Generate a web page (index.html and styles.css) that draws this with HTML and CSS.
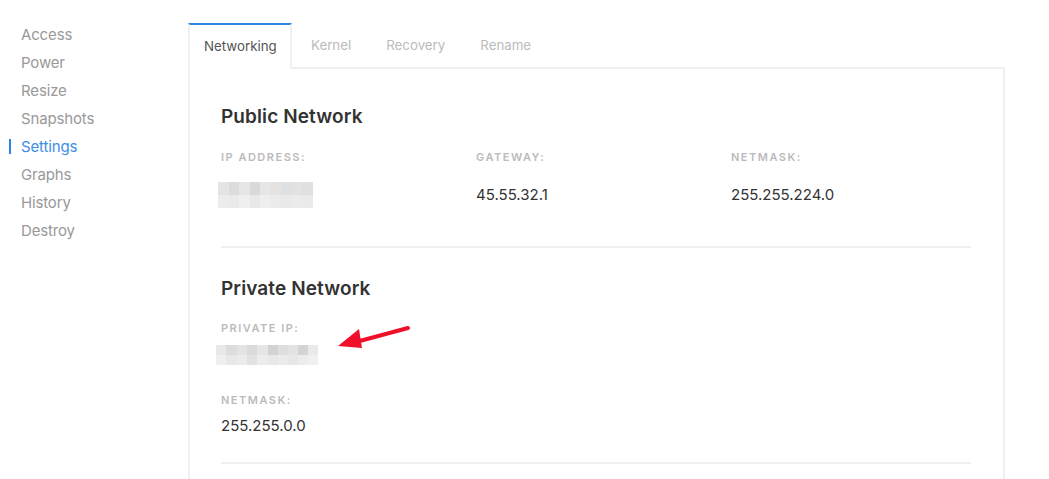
FILE: index.html
```html
<!DOCTYPE html>
<html>
<head>
<meta charset="utf-8">
<link rel="stylesheet" href="styles.css">
</head>
<body>
<div class="page">
  <nav class="sidebar">
    <a class="side-item">Access</a>
    <a class="side-item">Power</a>
    <a class="side-item">Resize</a>
    <a class="side-item">Snapshots</a>
    <a class="side-item active">Settings</a>
    <a class="side-item">Graphs</a>
    <a class="side-item">History</a>
    <a class="side-item">Destroy</a>
  </nav>
  <main class="main">
    <div class="tabs">
      <div class="tab active">Networking</div>
      <div class="tab">Kernel</div>
      <div class="tab">Recovery</div>
      <div class="tab">Rename</div>
    </div>
    <div class="panel">
      <section class="section section-public">
        <h2 class="heading">Public Network</h2>
        <div class="cols">
          <div class="field">
            <div class="label">IP Address:</div>
            <div class="value-row">
              <svg class="blur blur-public" width="95" height="26" viewBox="0 0 95 26">
                <rect x="0" y="0" width="11" height="13" fill="#e4e4e4"/>
                <rect x="11" y="0" width="10" height="13" fill="#dcdcdc"/>
                <rect x="21" y="0" width="11" height="13" fill="#e6e6e4"/>
                <rect x="32" y="0" width="10" height="13" fill="#d9d9d9"/>
                <rect x="42" y="0" width="11" height="13" fill="#e6e6e6"/>
                <rect x="53" y="0" width="10" height="13" fill="#e4e3e1"/>
                <rect x="63" y="0" width="11" height="13" fill="#dfe0e3"/>
                <rect x="74" y="0" width="10" height="13" fill="#e3e1e1"/>
                <rect x="84" y="0" width="11" height="13" fill="#e0e0e0"/>
                <rect x="0" y="13" width="11" height="13" fill="#ececec"/>
                <rect x="11" y="13" width="10" height="13" fill="#e8eaec"/>
                <rect x="21" y="13" width="11" height="13" fill="#f0efed"/>
                <rect x="32" y="13" width="10" height="13" fill="#e8e8e8"/>
                <rect x="42" y="13" width="11" height="13" fill="#eeeef0"/>
                <rect x="53" y="13" width="10" height="13" fill="#ebebe9"/>
                <rect x="63" y="13" width="11" height="13" fill="#e9e9ea"/>
                <rect x="74" y="13" width="10" height="13" fill="#ebebeb"/>
                <rect x="84" y="13" width="11" height="13" fill="#eaeaea"/>
              </svg>
            </div>
          </div>
          <div class="field">
            <div class="label">Gateway:</div>
            <div class="value-row"><span class="value">45.55.32.1</span></div>
          </div>
          <div class="field">
            <div class="label">Netmask:</div>
            <div class="value-row"><span class="value">255.255.224.0</span></div>
          </div>
        </div>
      </section>
      <hr class="divider">
      <section class="section section-private">
        <h2 class="heading">Private Network</h2>
        <div class="field">
          <div class="label">Private IP:</div>
          <div class="private-row">
            <svg class="blur blur-private" width="102" height="20" viewBox="0 0 102 20">
              <rect x="0" y="0" width="10" height="10" fill="#e8e8e8"/>
              <rect x="10" y="0" width="11" height="10" fill="#dddddd"/>
              <rect x="21" y="0" width="10" height="10" fill="#e3e3e3"/>
              <rect x="31" y="0" width="10" height="10" fill="#dadada"/>
              <rect x="41" y="0" width="11" height="10" fill="#e6e6e6"/>
              <rect x="52" y="0" width="10" height="10" fill="#d4d2d4"/>
              <rect x="62" y="0" width="10" height="10" fill="#dedede"/>
              <rect x="72" y="0" width="10" height="10" fill="#e3e3e3"/>
              <rect x="82" y="0" width="10" height="10" fill="#d4d4d4"/>
              <rect x="92" y="0" width="10" height="10" fill="#e9e9e9"/>
              <rect x="0" y="10" width="10" height="10" fill="#efefef"/>
              <rect x="10" y="10" width="11" height="10" fill="#e8e8e8"/>
              <rect x="21" y="10" width="10" height="10" fill="#ebebeb"/>
              <rect x="31" y="10" width="10" height="10" fill="#e2e2e2"/>
              <rect x="41" y="10" width="11" height="10" fill="#ececec"/>
              <rect x="52" y="10" width="10" height="10" fill="#e8e8e8"/>
              <rect x="62" y="10" width="10" height="10" fill="#ebebeb"/>
              <rect x="72" y="10" width="10" height="10" fill="#e7e7e7"/>
              <rect x="82" y="10" width="10" height="10" fill="#ececec"/>
              <rect x="92" y="10" width="10" height="10" fill="#f0f0f0"/>
            </svg>
            <svg class="arrow" width="76" height="24" viewBox="0 0 76 24">
              <line x1="70" y1="3" x2="18" y2="17" stroke="#f0102a" stroke-width="4" stroke-linecap="round"/>
              <polygon points="0,21 21,4 24,23" fill="#f0102a"/>
            </svg>
          </div>
        </div>
        <div class="field field-netmask">
          <div class="label">Netmask:</div>
          <div class="value">255.255.0.0</div>
        </div>
      </section>
      <hr class="divider">
    </div>
  </main>
</div>
</body>
</html>
```

FILE: styles.css
```css
* { box-sizing: border-box; }
html, body { margin: 0; padding: 0; background: #fff; }
body {
  font-family: "Inter", "Lato", sans-serif;
  color: #333;
  overflow: hidden;
  height: 479px;
}
.page {
  display: flex;
  align-items: flex-start;
}
.sidebar {
  width: 188px;
  flex: none;
  padding-top: 21px;
  display: flex;
  flex-direction: column;
}
.side-item {
  position: relative;
  display: block;
  padding-left: 21px;
  font-size: 15px;
  line-height: 28px;
  color: #999;
  letter-spacing: -0.15px;
}
.side-item.active { color: #3d8ee6; }
.side-item.active::before {
  content: "";
  position: absolute;
  left: 9px;
  top: 6px;
  width: 2px;
  height: 15px;
  background: #2a86e6;
}
.main {
  width: 817px;
  flex: none;
  margin-top: 23px;
}
.tabs {
  display: flex;
  height: 44px;
  position: relative;
  z-index: 1;
}
.tab {
  font-size: 13.3px;
  color: #bbb;
  line-height: 44px;
  padding: 0 16px 0 19px;
}
.tab.active {
  color: #555;
  background: #fff;
  border: 2px solid #f0f0f0;
  border-top-color: #2a86e6;
  border-bottom: none;
  height: 46px;
  padding: 1px 14px 0;
  line-height: 40px;
  width: 104px;
}
.panel {
  border: 2px solid #f0f0f0;
  border-bottom: none;
  min-height: 412px;
  padding: 7px 32px 0 31px;
}
.section { padding-top: 29px; }
.section-public { padding-bottom: 38px; }
.section-private { padding-bottom: 26px; }
.heading {
  margin: 0;
  font-size: 19px;
  line-height: 24px;
  font-weight: 600;
  color: #333;
  letter-spacing: 0.1px;
}
.cols {
  display: grid;
  grid-template-columns: 255px 255px 1fr;
  margin-top: 21px;
}
.label {
  font-size: 11px;
  line-height: 14px;
  font-weight: 600;
  text-transform: uppercase;
  letter-spacing: 1.5px;
  color: #bbb;
}
.value-row {
  margin-top: 18px;
  height: 26px;
  display: flex;
  align-items: center;
}
.value {
  font-size: 15px;
  line-height: 20px;
  color: #333;
}
.blur { display: block; }
.blur-public { margin-left: -3px; }
.section-private .field { margin-top: 20px; }
.private-row {
  margin-top: 10px;
  display: flex;
  align-items: flex-start;
}
.blur-private { margin-left: -5px; }
.arrow {
  margin-left: 20px;
  margin-top: -20px;
}
.section-private .field-netmask { margin-top: 28px; }
.field-netmask .value { margin-top: 9px; }
.divider {
  margin: 0;
  border: none;
  height: 2px;
  background: #f0f0f0;
}
```
